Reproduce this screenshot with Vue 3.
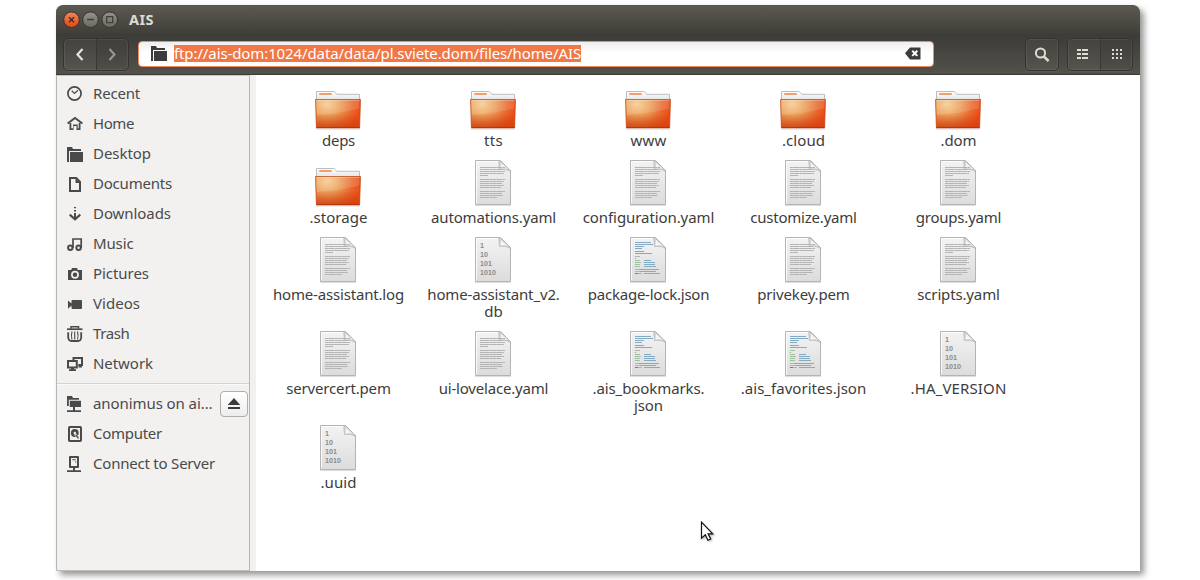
<script setup>
const family = '"Noto Sans", "Open Sans", sans-serif'

// Spreads a label's letters so that its advance width equals the given value.
const vFit = {
  mounted(el, { value }) {
    const count = [...el.textContent].length
    const width = el.getBoundingClientRect().width
    el.style.letterSpacing = ((value - width) / count).toFixed(3) + 'px'
  }
}

const places = [
  { id: 'recent', name: 'Recent', w: 47 },
  { id: 'home', name: 'Home', w: 41 },
  { id: 'desktop', name: 'Desktop', w: 58 },
  { id: 'documents', name: 'Documents', w: 79 },
  { id: 'downloads', name: 'Downloads', w: 78 },
  { id: 'music', name: 'Music', w: 40.5 },
  { id: 'pictures', name: 'Pictures', w: 56 },
  { id: 'videos', name: 'Videos', w: 47 },
  { id: 'trash', name: 'Trash', w: 36.5 },
  { id: 'network', name: 'Network', w: 60 }
]
const devices = [
  { id: 'remote', name: 'anonimus on ai…', w: 119.5, eject: true },
  { id: 'computer', name: 'Computer', w: 69 },
  { id: 'server', name: 'Connect to Server', w: 122 }
]
const groups = [places, devices]

const files = [
  { kind: 'folder', lines: [['deps', 33]] },
  { kind: 'folder', lines: [['tts', 19]] },
  { kind: 'folder', lines: [['www', 36]] },
  { kind: 'folder', lines: [['.cloud', 43]] },
  { kind: 'folder', lines: [['.dom', 36]] },
  { kind: 'folder', lines: [['.storage', 58]] },
  { kind: 'text', lines: [['automations.yaml', 125]] },
  { kind: 'text', lines: [['configuration.yaml', 131.5]] },
  { kind: 'text', lines: [['customize.yaml', 106.5]] },
  { kind: 'text', lines: [['groups.yaml', 85.5]] },
  { kind: 'text', lines: [['home-assistant.log', 131]] },
  { kind: 'binary', lines: [['home-assistant_v2.', 132.5], ['db', 18.5]] },
  { kind: 'code', lines: [['package-lock.json', 121.5]] },
  { kind: 'text', lines: [['privekey.pem', 92.5]] },
  { kind: 'text', lines: [['scripts.yaml', 82.5]] },
  { kind: 'text', lines: [['servercert.pem', 104.5]] },
  { kind: 'text', lines: [['ui-lovelace.yaml', 109.5]] },
  { kind: 'code', lines: [['.ais_bookmarks.', 112], ['json', 29]] },
  { kind: 'code', lines: [['.ais_favorites.json', 125.5]] },
  { kind: 'binary', lines: [['.HA_VERSION', 96]] },
  { kind: 'binary', lines: [['.uuid', 36]] }
]

const textLines = [
  [9, 25], [11, 23], [13, 25], [15, 24], [17, 8],
  [21, 25], [23, 24], [25, 22], [27, 24], [29, 21],
  [33, 25], [35, 22], [37, 23], [39, 17]
]
const codeLines = [
  [7, 11, 16, '#84abc2'], [9, 11, 18, '#84abc2'], [11, 11, 9, '#84abc2'], [13, 11, 7, '#84abc2'],
  [16, 11, 5, '#b884e8'], [16, 16, 4, '#e07fb0'],
  [18, 11, 4, '#b884e8'], [18, 15, 5, '#e07fb0'], [18, 20, 8, '#84abc2'],
  [21, 11, 3, '#93c795'], [21, 14, 2, '#b5b5b5'], [23, 11, 1, '#93a893'],
  [25, 11, 3, '#93c795'], [25, 14, 2, '#b5b5b5'], [25, 20, 7, '#84abc2'],
  [27, 11, 4, '#93c795'], [27, 15, 2, '#b5b5b5'], [27, 20, 11, '#84abc2'],
  [29, 11, 3, '#93c795'], [29, 14, 2, '#b5b5b5'], [29, 20, 11, '#84abc2'],
  [31, 11, 3, '#93c795'], [31, 14, 2, '#b5b5b5'], [31, 20, 12, '#84abc2'],
  [34, 11, 4, '#b5b5b5'], [34, 15, 20, '#e07fb0'],
  [36, 11, 5, '#b5b5b5'], [36, 16, 16, '#e07fb0'],
  [38, 11, 3, '#e0505c'], [38, 14, 4, '#b5b5b5'], [38, 20, 16, '#84abc2']
]
const dots = [0, 4, 8]
</script>

<template>
  <div class="desk" :style="{ fontFamily: family }">
    <svg class="defs" width="0" height="0" aria-hidden="true">
      <defs>
        <radialGradient id="front" gradientUnits="userSpaceOnUse" cx="13" cy="22" r="37" gradientTransform="translate(0 4) scale(1 .82)">
          <stop offset="0" stop-color="#f6cd92" />
          <stop offset=".35" stop-color="#eca25c" />
          <stop offset=".7" stop-color="#e8682e" />
          <stop offset=".95" stop-color="#ee4a15" />
        </radialGradient>
        <linearGradient id="shade" x1="0" y1="0" x2="0" y2="1">
          <stop offset=".5" stop-color="#b73c0a" stop-opacity="0" />
          <stop offset="1" stop-color="#b5390a" stop-opacity=".45" />
        </linearGradient>
        <linearGradient id="back" x1="0" y1="0" x2="0" y2="1">
          <stop offset="0" stop-color="#ffffff" />
          <stop offset="1" stop-color="#dedede" />
        </linearGradient>
        <linearGradient id="paper" x1="0" y1="0" x2="0" y2="1">
          <stop offset="0" stop-color="#f3f3f3" />
          <stop offset="1" stop-color="#dcdcdc" />
        </linearGradient>
        <linearGradient id="curl" x1="0" y1="1" x2="1" y2="0">
          <stop offset=".2" stop-color="#ffffff" />
          <stop offset=".7" stop-color="#dadada" />
        </linearGradient>
        <linearGradient id="red" x1="0" y1="0" x2="0" y2="1">
          <stop offset="0" stop-color="#f4845c" />
          <stop offset="1" stop-color="#df4a16" />
        </linearGradient>
        <linearGradient id="grey" x1="0" y1="0" x2="0" y2="1">
          <stop offset="0" stop-color="#94928b" />
          <stop offset="1" stop-color="#6b6963" />
        </linearGradient>
      </defs>
    </svg>

    <div class="window">
      <header class="titlebar">
        <svg class="controls" width="58" height="18" viewBox="0 0 58 18">
          <g stroke="#34332f">
            <circle cx="9.5" cy="8.7" r="7.8" fill="url(#red)" />
            <circle cx="28.5" cy="8.7" r="7.8" fill="url(#grey)" />
            <circle cx="47.7" cy="8.7" r="7.8" fill="url(#grey)" />
          </g>
          <g fill="none" stroke="#3a2a22" stroke-width="1.3">
            <path d="M7 6.2l5 5M12 6.2l-5 5" />
            <path d="M25 8.5h7M44.7 5.7h6v6h-6z" stroke="#403f3a" />
          </g>
        </svg>
        <b class="title"><span v-fit="25">AIS</span></b>
      </header>

      <div class="toolbar">
        <div class="group nav">
          <div class="cell">
            <svg width="16" height="16" viewBox="0 0 16 16"><path d="M10.5 2L5.5 7.5l5 5.5" fill="none" stroke="#e6e3dc" stroke-width="2.2" /></svg>
          </div>
          <div class="cell pressed">
            <svg width="16" height="16" viewBox="0 0 16 16"><path d="M5.5 2l5 5.5-5 5.5" fill="none" stroke="#9b9992" stroke-width="2" /></svg>
          </div>
        </div>
        <div class="location">
          <svg class="locicon" width="16" height="16" viewBox="0 0 16 16" fill="#3c3c3c">
            <path d="M0 0h5l1 2h8v2H2v11H0z" /><path d="M3 5h13v10H3z" />
          </svg>
          <span class="url"><span v-fit="407">ftp://ais-dom:1024/data/data/pl.sviete.dom/files/home/AIS</span></span>
          <svg class="clear" width="16" height="13" viewBox="0 0 16 13">
            <path d="M0 6.3L5 .5h10.5v12H5z" fill="#3c3c3c" />
            <path d="M7.3 3.7l5 5.2M12.3 3.7l-5 5.2" stroke="#fff" stroke-width="2" />
          </svg>
        </div>
        <div class="group search">
          <div class="cell">
            <svg width="16" height="16" viewBox="0 0 16 16" fill="none" stroke="#dfdbd2"><circle cx="6.5" cy="6" r="4.6" stroke-width="2" /><path d="M9.8 9.5l4.8 4.5" stroke-width="2.4" /></svg>
          </div>
        </div>
        <div class="group views">
          <div class="cell">
            <svg class="glyph" width="12" height="10" viewBox="0 0 12 10" fill="#dfdbd2">
              <template v-for="d in dots" :key="d"><rect x="0" :y="d" width="4" height="2" /><rect x="5" :y="d" width="6" height="2" /></template>
            </svg>
          </div>
          <div class="cell pressed">
            <svg class="glyph grid" width="10" height="10" viewBox="0 0 10 10" fill="#dfdbd2">
              <template v-for="y in dots" :key="y"><rect v-for="x in dots" :key="x" :x="x" :y="y" width="2" height="2" /></template>
            </svg>
          </div>
        </div>
      </div>

      <div class="body">
        <nav class="sidebar">
          <div v-for="(g, i) in groups" :key="i" class="section">
            <div v-for="p in g" :key="p.id" class="place">
              <svg class="picon" width="16" height="16" viewBox="0 0 16 16" fill="#4a4a4a">
                <g v-if="p.id === 'recent'" fill="none" stroke="#4a4a4a"><circle cx="7.5" cy="7.5" r="6.6" stroke-width="1.7" /><path d="M4.7 4.8l2.8 2.7 3.5-3.2" stroke-width="1.2" /></g>
                <g v-else-if="p.id === 'home'"><path d="M.6 7.6L8 2l7.4 5.6" fill="none" stroke="#4a4a4a" stroke-width="1.9" /><path d="M2.5 7v7h4v-4h3v4h4V7h-1.8v5.3h-1V8.5H6v3.8H4.3V7z" /></g>
                <g v-else-if="p.id === 'desktop'"><path d="M0 1h5l1 2h8v2H2v11H0z" /><path d="M3 6h13v10H3z" /></g>
                <g v-else-if="p.id === 'documents'"><path d="M3 2h6.3L13 6v8.9H3z" fill="none" stroke="#4a4a4a" stroke-width="2" /><path d="M8.5 2v5H13z" /></g>
                <g v-else-if="p.id === 'downloads'"><path d="M7 1h2v1.3H7zM7 4h2v1.6H7zM7 7h2v5H7z" /><path d="M2.7 8.6L8 13.3l5.3-4.7" fill="none" stroke="#4a4a4a" stroke-width="2.1" /></g>
                <g v-else-if="p.id === 'music'" fill="none" stroke="#4a4a4a" stroke-width="2"><circle cx="3.3" cy="11.7" r="2.2" /><circle cx="11.6" cy="11.7" r="2.2" /><path d="M6 12V3h8.2v9" stroke-width="1.7" /></g>
                <g v-else-if="p.id === 'pictures'"><path d="M1 4h3.2l.8-2h5l.8 2H15v10H1z" /><circle cx="8" cy="8.8" r="3.1" fill="none" stroke="#f2f1f0" stroke-width="1.7" /></g>
                <g v-else-if="p.id === 'videos'"><path d="M1 4.5l3.5 3V5.1Q4.5 4 5.6 4H14q1 0 1 1v7q0 1-1 1H5.6q-1.1 0-1.1-1V9.6L1 12.7z" /></g>
                <g v-else-if="p.id === 'trash'" fill="none" stroke="#4a4a4a"><path d="M0 3.2h15.5" stroke-width="1.7" /><path d="M4 2.7V.8h7.5v1.9" stroke-width="1.5" /><path d="M1.2 6.2v5Q1.5 15 4.5 15H11q3-0 3.2-3.8v-5" stroke-width="1.8" /><path d="M5 5.5q-1.2 4 0 8M7.7 5.5v8M10.5 5.5q1.2 4 0 8" stroke-width="1.1" /></g>
                <g v-else-if="p.id === 'network'"><path d="M6.5 4V2H15v7h-3.5" fill="none" stroke="#4a4a4a" stroke-width="2" /><path d="M1 5h8.8v6.4H1z" fill="none" stroke="#4a4a4a" stroke-width="2" /><path d="M4 12h3v1.3h2V15H2v-1.7h2zM11.5 8H14v2h1v1.5h-3.5z" /></g>
                <g v-else-if="p.id === 'remote'"><path d="M0 0h5l1 2h6v1.7H1.8V10H0z" /><path d="M2.8 4.8H14V11H2.8zM6 11h2v3.2h6V16H0v-1.8h6z" /></g>
                <g v-else-if="p.id === 'computer'"><rect x="2" y="1" width="12" height="14" rx=".8" fill="none" stroke="#4a4a4a" stroke-width="2" /><circle cx="7.8" cy="7" r="3.9" /><circle cx="7.8" cy="7" r="1.2" fill="#f2f1f0" /><path d="M8 8l3.7 4.5" stroke="#f2f1f0" stroke-width="2.4" /><path d="M8.7 8.6l2.8 3.8" stroke="#4a4a4a" stroke-width="1.4" /></g>
                <g v-else><path d="M3 1h8v10H3z" fill="none" stroke="#4a4a4a" stroke-width="2" stroke-linejoin="round" /><path d="M5.3 3.3h3.5v1H5.3zM8 5.4h1.2v1.2H8zM6 11h2v3.2h6V16H0v-1.8h6z" /></g>
              </svg>
              <span class="pname"><span v-fit="p.w">{{ p.name }}</span></span>
              <span v-if="p.eject" class="eject">
                <svg width="14" height="12" viewBox="0 0 14 12" fill="#3c3c3c"><path d="M7 0l6.3 7H.7zM1 9h12v2H1z" /></svg>
              </span>
            </div>
          </div>
        </nav>

        <main class="files">
          <div v-for="(f, i) in files" :key="i" class="file">
            <svg width="48" height="48" viewBox="0 0 48 48">
              <g v-if="f.kind === 'folder'">
                <path d="M2 47h44" stroke="#000" stroke-opacity=".16" />
                <path d="M2.5 20V9.5h17.2q.8 0 1.5.9l1.6 1.9h22.7V20z" fill="url(#back)" stroke="#bcbcbc" />
                <rect x="5" y="11" width="13" height="2" rx="1" fill="#f0a06c" />
                <path d="M1.5 17.5h45l-.9 28.4H2.4z" fill="url(#front)" />
                <path d="M1.5 17.5h45l-.9 28.4H2.4z" fill="url(#shade)" />
                <path d="M2.5 18.5h43l-.5 8Q28 31 2.8 33z" fill="#fff" fill-opacity=".13" />
                <path d="M2.5 18.5h43" stroke="#fff" stroke-opacity=".3" />
                <path d="M1.5 17.5h45l-.9 28.2H2.4z" fill="none" stroke="#bf4a18" stroke-opacity=".75" />
                <path d="M2.4 45.7h43.2" stroke="#a52a04" stroke-opacity=".7" />
              </g>
              <g v-else>
                <path d="M6 46.6h36" stroke="#000" stroke-opacity=".14" />
                <path d="M6.5 1.5h25L41.5 11.5v34h-35z" fill="url(#paper)" stroke="#b4b4b4" />
                <path d="M7.5 44.5v-42h22" fill="none" stroke="#fff" stroke-opacity=".8" />
                <path d="M29 2h2.5l10 9.8v1.3Q37 10 30 11z" fill="#000" fill-opacity=".14" />
                <path d="M30.5 1.5q1.3 3.5.3 8.5 5.5-1 10.7 1.5z" fill="url(#curl)" stroke="#b9b9b9" stroke-width=".8" />
                <g v-if="f.kind === 'text'" stroke="#b3b3b3">
                  <path v-for="[y, w] in textLines" :key="y" :d="`M11 ${y - .5}h${w}`" stroke-dasharray="3.8 .2 5.7 .3 2.8 .2" />
                </g>
                <g v-else-if="f.kind === 'code'">
                  <rect v-for="([y, x, w, c], n) in codeLines" :key="n" :x="x" :y="y - 1" :width="w" height="1" :fill="c" />
                </g>
                <g v-else class="bits">
                  <text x="11" y="12">1</text><text x="11" y="21">10</text><text x="11" y="30">101</text><text x="11" y="39">1010</text>
                </g>
              </g>
            </svg>
            <div class="label">
              <div v-for="[t, w] in f.lines" :key="t" class="line"><span v-fit="w">{{ t }}</span></div>
            </div>
          </div>
        </main>
      </div>
    </div>

    <svg class="pointer" width="16" height="22" viewBox="0 0 16 22">
      <path d="M1.5 1.2v16l3.8-3.4 2.6 5.5 2.8-1.3-2.6-5.2h4.6z" fill="#fff" stroke="#111" stroke-width="1.2" />
    </svg>
  </div>
</template>

<style>
body { background: #fff; overflow: hidden; }
</style>

<style scoped>
.desk { position: relative; width: 1200px; height: 580px; box-sizing: border-box; padding: 5px 60px 9px 56px; background: #fff; font-size: 15px; color: #3c3c3c; overflow: hidden; }
.desk * { box-sizing: border-box; }
.defs { position: absolute; }
.desk svg { display: block; flex: none; }
.window { width: 1084px; height: 566px; display: flex; flex-direction: column; border-radius: 7px 7px 0 0; box-shadow: 4px 4px 6px rgba(0, 0, 0, .42); background: #fff; }
.titlebar { height: 29px; display: flex; align-items: center; padding-left: 6px; border-radius: 7px 7px 0 0; background: linear-gradient(#5c5950, #3f3e39); border-top: 1px solid #55534b; }
.title { margin: -2px 0 0 9px; color: #dfdbd2; font-size: 14.5px; line-height: 20px; }
.toolbar { height: 41px; display: flex; align-items: flex-start; padding: 4px 7px 0; background: linear-gradient(#3c3b37, #53514a); border-bottom: 1px solid #3a3934; }
.group { display: flex; height: 33px; border: 1px solid #34332f; border-radius: 5px; box-shadow: inset 0 0 0 1px rgba(255, 255, 255, .07), 0 1px 0 rgba(255, 255, 255, .06); background: rgba(255, 255, 255, .03); overflow: hidden; }
.cell { flex: 1; display: flex; align-items: center; justify-content: center; }
.pressed { background: rgba(0, 0, 0, .07); border-left: 1px solid #393833; }
.nav { width: 66px; }
.search { width: 34px; margin-left: 91px; }
.views { width: 66px; margin-left: 8px; }
.glyph { margin: 0 2px 1px 0; }
.glyph.grid { margin: 0 0 1px 1px; }
.location { width: 796px; height: 26px; margin: 3px 0 0 9px; padding: 0 12px 0 12px; display: flex; align-items: center; border: 1px solid #ee8a60; border-radius: 4px; background: linear-gradient(#efefef, #fff 45%); }
.url { margin: 0 0 2px 7px; height: 17px; line-height: 17px; background: #f07746; color: #fff; font-size: 15px; white-space: nowrap; }
.clear { margin: 0 0 2px auto; }
.body { flex: 1; display: flex; background: #f2f1f0; }
.sidebar { width: 194px; border: 1px solid #b8b6b3; border-top-color: #c9c7c4; border-bottom-color: #c0bebb; padding-top: 3px; }
.section + .section { margin-top: 4px; padding-top: 5px; border-top: 1px solid #d6d4d1; box-shadow: inset 0 1px 0 #fafafa; }
.place { height: 30px; display: flex; align-items: center; padding: 0 1px 0 10px; color: #4a4a4a; }
.pname { margin: 0 0 2px 10px; line-height: 20px; white-space: nowrap; }
.eject { width: 28px; height: 26px; margin-left: auto; display: flex; align-items: center; justify-content: center; border: 1px solid #b0aeab; border-radius: 4px; background: linear-gradient(#fff, #ededed); }
.files { flex: 1; margin-left: 6px; padding: 7px 0 0 4px; background: #fff; display: grid; grid-template-columns: repeat(5, 155px); align-content: start; row-gap: 10px; }
.file { display: flex; flex-direction: column; align-items: center; }
.label { padding: 2px 0 0 2px; text-align: center; }
.line { height: 17px; line-height: 17px; white-space: nowrap; }
.line span { display: inline-block; height: 17px; vertical-align: top; }
.bits { font: bold 7.2px "Liberation Sans", sans-serif; fill: #8c8c8c; }
.pointer { position: absolute; left: 700px; top: 521px; filter: drop-shadow(1px 1px 1px rgba(0, 0, 0, .3)); }
</style>
